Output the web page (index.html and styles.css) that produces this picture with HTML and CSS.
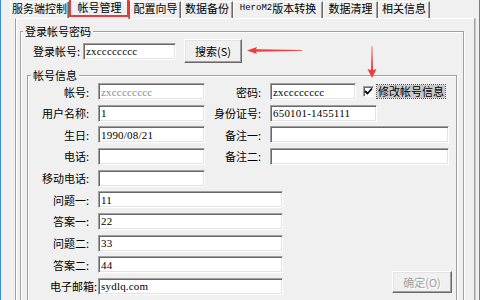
FILE: index.html
```html
<!DOCTYPE html>
<html lang="zh-CN">
<head>
<meta charset="utf-8">
<title>帐号管理</title>
<link rel="stylesheet" href="styles.css">
</head>
<body>
<div class="window">
  <div class="tabs">
    <div class="tab w59">服务端控制</div>
    <div class="tab tab-active w61">帐号管理</div>
    <div class="tab w51">配置向导</div>
    <div class="tab w52">数据备份</div>
    <div class="tab w90"><span class="mono">HeroM2</span>版本转换</div>
    <div class="tab w55">数据清理</div>
    <div class="tab w52">相关信息</div>
  </div>
  <div class="page">
    <fieldset class="group group-outer">
      <legend>登录帐号密码</legend>
      <div class="login-row">
        <span class="login-label">登录帐号:</span>
        <div class="field login-field val">zxcccccccc</div>
        <div class="btn btn-search">搜索(S)</div>
      </div>
      <fieldset class="group group-inner">
        <legend>帐号信息</legend>
        <div class="form">
          <span class="lbl c1">帐号:</span>
          <div class="field c2 val disabled">zxcccccccc</div>
          <span class="lbl c3">密码:</span>
          <div class="c4 pwd-cell">
            <div class="field w86 val">zxcccccccc</div>
            <span class="check"><svg width="9" height="9" viewBox="0 0 9 9"><path d="M1 4 L3.5 6.5 L8 1.5" fill="none" stroke="#000" stroke-width="1.8"/></svg></span>
            <span class="cb-label">修改帐号信息</span>
          </div>

          <span class="lbl c1">用户名称:</span>
          <div class="field c2 val">1</div>
          <span class="lbl c3">身份证号:</span>
          <div class="field c4 w107 val">650101-1455111</div>

          <span class="lbl c1">生日:</span>
          <div class="field c2 val">1990/08/21</div>
          <span class="lbl c3">备注一:</span>
          <div class="field c4 w179 val"></div>

          <span class="lbl c1">电话:</span>
          <div class="field c2 val"></div>
          <span class="lbl c3">备注二:</span>
          <div class="field c4 w179 val"></div>

          <span class="lbl c1">移动电话:</span>
          <div class="field c2 val"></div>

          <span class="lbl c1">问题一:</span>
          <div class="field cw val">11</div>

          <span class="lbl c1">答案一:</span>
          <div class="field cw val">22</div>

          <span class="lbl c1">问题二:</span>
          <div class="field cw val">33</div>

          <span class="lbl c1">答案二:</span>
          <div class="field cw val">44</div>

          <span class="lbl c1 lbl-email">电子邮箱:</span>
          <div class="field cw val">sydlq.com</div>
          <div class="btn btn-ok">确定(O)</div>
        </div>
      </fieldset>
    </fieldset>
  </div>
  <svg class="overlay" width="480" height="300" viewBox="0 0 480 300">
    <rect x="70" y="-2" width="58" height="18" fill="none" stroke="#e8393b" stroke-width="2"/>
    <polygon points="247,50.5 257,47 256,49.2 302,50.1 302,50.8 256,51.8 257,54" fill="#ee3b3b"/>
    <polygon points="372,78 367.5,69 371,70 371.7,46 372.3,46 373,70 376.5,69" fill="#ee3b3b"/>
  </svg>
</div>
</body>
</html>
```

FILE: styles.css
```css
* { box-sizing: border-box; }
html, body { margin: 0; padding: 0; }
body {
  width: 480px;
  height: 300px;
  overflow: hidden;
  background: #f0f0f0;
  font-family: "Noto Sans CJK SC", "Noto Sans", sans-serif;
  font-size: 11px;
  color: #000;
}
.mono {
  font-family: "Liberation Mono", "DejaVu Sans Mono", monospace;
  font-size: 9px;
}
.val {
  font-family: "Liberation Serif", "DejaVu Serif", serif;
  font-size: 11px;
  letter-spacing: 0.2px;
}
.window {
  position: relative;
  width: 480px;
  height: 300px;
  overflow: hidden;
  border-left: 1px solid #3b8de0;
  border-right: 1px solid #3b8de0;
  background: #f0f0f0;
}

/* tabs */
.tabs {
  display: flex;
  align-items: flex-start;
  height: 18px;
  padding-left: 9px;
}
.tab {
  display: flex;
  align-items: center;
  justify-content: center;
  margin-top: 1px;
  height: 17px;
  padding-bottom: 3px;
  border-top: 1px solid #fff;
  border-left: 1px solid #fff;
  border-right: 1px solid #696969;
  box-shadow: inset -1px 0 0 #a0a0a0;
  line-height: 13px;
  white-space: nowrap;
}
.tab-active {
  position: relative;
  z-index: 1;
  margin-top: 0;
  height: 19px;
  padding-bottom: 6px;
  background: #f0f0f0;
}
.w51 { width: 51px; }
.w52 { width: 52px; }
.w55 { width: 55px; }
.w59 { width: 59px; }
.w61 { width: 61px; }
.w90 { width: 90px; }

/* tab page */
.page {
  margin-left: 14px;
  width: 460px;
  height: 290px;
  padding: 5px 0 0 4px;
  border-top: 1px solid #fff;
  border-left: 1px solid #a0a0a0;
  border-right: 1px solid #a0a0a0;
  box-shadow: 1px 0 0 #c8c8c8, inset 1px 0 0 #fff;
}

/* group boxes */
.group {
  margin: 0;
  min-width: 0;
  border: 1px solid #a0a0a0;
  box-shadow: inset 1px 1px 0 #fff, 1px 1px 0 #fff;
}
.group legend {
  padding: 0 2px;
  line-height: 14px;
  height: 14px;
  background: #f0f0f0;
}
.group-outer {
  width: 444px;
  height: 300px;
  padding: 0 6px;
}
.group-outer > legend { margin-left: -4px; }
.group-inner {
  margin-top: 5px;
  width: 430px;
  height: 250px;
  padding: 1px 3px 0;
}

/* login row */
.login-row {
  display: flex;
  align-items: center;
  margin-top: 1px;
  height: 24px;
  padding-left: 6px;
}
.login-label {
  width: 50px;
  white-space: nowrap;
}
.login-field {
  width: 93px;
  height: 19px;
}
.btn-search {
  margin-left: 8px;
  width: 58px;
  height: 24px;
}

/* fields */
.field {
  display: flex;
  align-items: center;
  height: 17px;
  padding: 0 1px 0 2px;
  background: #fff;
  border: 1px solid;
  border-color: #a0a0a0 #fff #fff #a0a0a0;
  box-shadow: inset 1px 1px 0 #696969, inset -1px -1px 0 #e3e3e3;
  line-height: 14px;
  white-space: nowrap;
  overflow: hidden;
}
.field.disabled { color: #8a8a8a; }
.w86 { width: 86px; }
.w107 { width: 107px; }
.w179 { width: 179px; }

/* buttons */
.btn {
  display: flex;
  align-items: center;
  justify-content: center;
  background: #f0f0f0;
  border: 1px solid;
  border-color: #fff #696969 #696969 #fff;
  box-shadow: inset -1px -1px 0 #a0a0a0, inset 1px 1px 0 #e3e3e3;
  line-height: 14px;
  white-space: nowrap;
}
.btn-ok {
  grid-row: 10;
  grid-column: 4;
  justify-self: end;
  align-self: end;
  width: 60px;
  height: 22px;
  margin: 0 1px 2px 0;
  color: #a0a0a0;
  text-shadow: 1px 1px 0 #fff;
}

/* form grid */
.form {
  display: grid;
  grid-template-columns: 67px 107px 65px 1fr;
  grid-auto-rows: 17px;
  row-gap: 4.667px;
}
.lbl {
  display: flex;
  align-items: center;
  justify-content: flex-end;
  padding-right: 9px;
  white-space: nowrap;
  line-height: 14px;
}
.lbl-email { padding-right: 1px; }
.c1 { grid-column: 1; }
.c2 { grid-column: 2; }
.c3 { grid-column: 3; }
.c4 { grid-column: 4; justify-self: start; }
.cw { grid-column: 2 / 4; width: 185px; }

.pwd-cell {
  display: flex;
  align-items: center;
}
.check {
  display: flex;
  align-items: center;
  justify-content: center;
  margin-left: 7px;
  width: 11px;
  height: 11px;
  background: #fff;
  border: 1px solid;
  border-color: #a0a0a0 #fff #fff #a0a0a0;
  box-shadow: inset 1px 1px 0 #696969;
}
.cb-label {
  margin-left: 3px;
  padding: 0 1px;
  line-height: 13px;
  background: #c9c9c9;
  outline: 1px dotted #555;
  white-space: nowrap;
}

.overlay {
  position: absolute;
  left: -1px;
  top: 0;
  z-index: 2;
  pointer-events: none;
}
```
